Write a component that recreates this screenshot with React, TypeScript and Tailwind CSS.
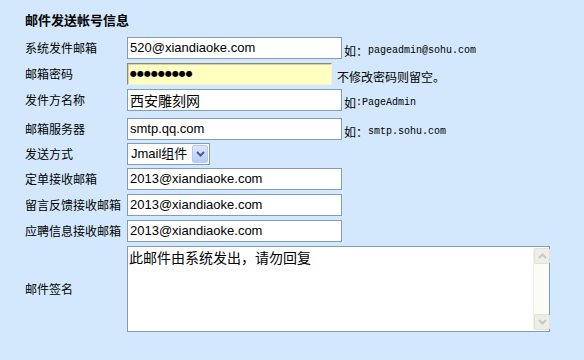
import React from 'react';

const cjk = { fontFamily: '"Noto Sans CJK SC", "Liberation Sans", sans-serif' };
const latin = { fontFamily: '"Liberation Sans", "Noto Sans CJK SC", sans-serif' };
const mono = { fontFamily: '"Liberation Mono", monospace' };

function Label({ children }: { children: React.ReactNode }) {
  return (
    <div className="w-[127px] pl-[25px] text-[12px] leading-[14px] text-black shrink-0 whitespace-nowrap" style={cjk}>
      {children}
    </div>
  );
}

function TextBox({ value }: { value: string }) {
  return (
    <div
      className="w-[215px] h-[22px] border border-[#7f9db9] bg-white px-[2px] flex items-center text-[13px] text-black whitespace-nowrap overflow-hidden"
      style={latin}
    >
      {value}
    </div>
  );
}

function Hint({ prefix, text }: { prefix: string; text: string }) {
  return (
    <div className="ml-[2px] pt-[6px] flex items-center whitespace-nowrap text-black">
      <span className="text-[12px] leading-[14px]" style={cjk}>{prefix}</span>
      <span className="text-[10px] leading-[14px]" style={mono}>{text}</span>
    </div>
  );
}

function Chevron({ up, color }: { up?: boolean; color: string }) {
  return (
    <svg width="9" height="6" viewBox="0 0 9 6">
      <path
        d={up ? 'M1 5 L4.5 1.5 L8 5' : 'M1 1 L4.5 4.5 L8 1'}
        fill="none"
        stroke={color}
        strokeWidth="2"
      />
    </svg>
  );
}

export default function App() {
  return (
    <div className="w-[584px] h-[360px] bg-[#d3e8fc] overflow-hidden">
      <div className="pl-[25px] pt-[13px] h-[37px]">
        <div className="text-[13px] leading-[14px] font-bold text-black" style={cjk}>
          邮件发送帐号信息
        </div>
      </div>

      <div className="flex flex-col">
        <div className="flex items-center h-[22px]">
          <Label>系统发件邮箱</Label>
          <TextBox value="520@xiandiaoke.com" />
          <Hint prefix="如：" text="pageadmin@sohu.com" />
        </div>

        <div className="flex items-center h-[22px] mt-[4px]">
          <Label>邮箱密码</Label>
          <div className="w-[205px] h-[22px] bg-[#ffffc0] border border-t-[#8c8a74] border-l-[#8c8a74] border-r-[#f3f3d8] border-b-[#f3f3d8] shadow-[inset_1px_1px_0_#d4d2b4] pl-[2px] flex items-center">
            <span className="text-[8px] leading-[10px] text-black" style={{ fontFamily: '"DejaVu Sans", sans-serif' }}>
              ●●●●●●●●●
            </span>
          </div>
          <div className="ml-[5px] pt-[6px] text-[12px] leading-[14px] text-black whitespace-nowrap" style={cjk}>
            不修改密码则留空。
          </div>
        </div>

        <div className="flex items-center h-[22px] mt-[4px]">
          <Label>发件方名称</Label>
          <div
            className="w-[215px] h-[22px] border border-[#7f9db9] bg-white px-[2px] flex items-center text-[14px] text-black"
            style={cjk}
          >
            西安雕刻网
          </div>
          <Hint prefix="如" text=":PageAdmin" />
        </div>

        <div className="flex items-center h-[22px] mt-[7px]">
          <Label>邮箱服务器</Label>
          <TextBox value="smtp.qq.com" />
          <Hint prefix="如：" text="smtp.sohu.com" />
        </div>

        <div className="flex items-center h-[22px] mt-[3px]">
          <Label>发送方式</Label>
          <div className="w-[83px] h-[22px] border border-[#7f9db9] bg-white flex items-center justify-between pl-[3px] pr-[1px]">
            <span className="text-[13px] text-black whitespace-nowrap" style={latin}>Jmail组件</span>
            <div className="w-[16px] h-[18px] rounded-[2px] border border-[#b8c9ef] bg-gradient-to-b from-[#dce6fd] to-[#b9cbf7] flex items-center justify-center">
              <Chevron color="#4d6185" />
            </div>
          </div>
        </div>

        <div className="flex items-center h-[22px] mt-[3px]">
          <Label>定单接收邮箱</Label>
          <TextBox value="2013@xiandiaoke.com" />
        </div>

        <div className="flex items-center h-[22px] mt-[4px]">
          <Label>留言反馈接收邮箱</Label>
          <TextBox value="2013@xiandiaoke.com" />
        </div>

        <div className="flex items-center h-[22px] mt-[4px]">
          <Label>应聘信息接收邮箱</Label>
          <TextBox value="2013@xiandiaoke.com" />
        </div>

        <div className="flex items-center h-[86px] mt-[4px]">
          <Label>邮件签名</Label>
          <div className="w-[423px] h-[86px] border border-[#7f9db9] bg-white flex">
            <div className="flex-1 pl-[1px] pt-[2px] text-[14px] leading-[16px] text-black" style={cjk}>
              此邮件由系统发出，请勿回复
            </div>
            <div className="w-[16px] my-[1px] flex flex-col bg-[#fbfbf8] border-l border-[#f0efea]">
              <div className="w-[16px] h-[16px] rounded-[2px] bg-[#eeede6] border border-[#e2e1da] flex items-center justify-center">
                <Chevron up color="#c9c8c0" />
              </div>
              <div className="flex-1" />
              <div className="w-[16px] h-[16px] rounded-[2px] bg-[#eeede6] border border-[#e2e1da] flex items-center justify-center">
                <Chevron color="#c9c8c0" />
              </div>
            </div>
          </div>
        </div>
      </div>
    </div>
  );
}
